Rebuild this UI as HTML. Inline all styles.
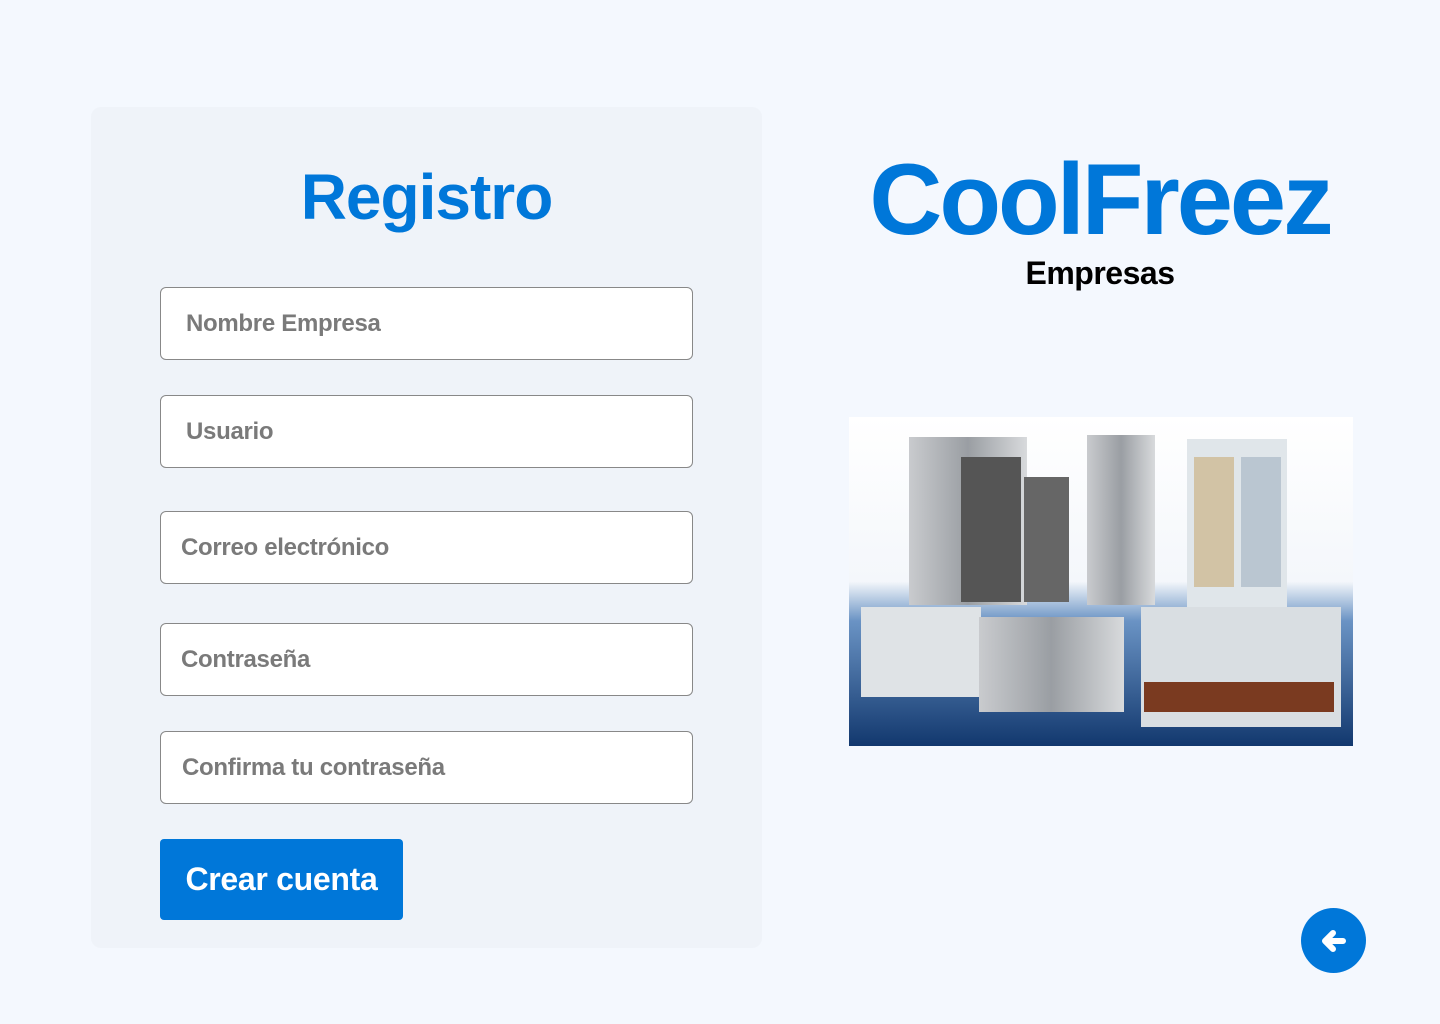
<!DOCTYPE html>
<html><head><meta charset="utf-8"><style>
*{box-sizing:border-box;margin:0;padding:0}
body{width:1440px;height:1024px;background:#f4f8fe;font-family:"Liberation Sans",Arial,sans-serif;position:relative;overflow:hidden}
.card{position:absolute;left:91px;top:107px;width:671px;height:841px;background:#eff3f9;border-radius:10px}
h1{position:absolute;left:91px;width:671px;top:160px;text-align:center;color:#0077d9;font-size:64px;font-weight:bold;letter-spacing:-1px}
.in{position:absolute;left:160px;width:533px;height:73px;background:#fff;border:1px solid #888;border-radius:6px;font-size:24px;font-weight:bold;color:#7a7a7a;line-height:72px;padding-left:25px;letter-spacing:-0.3px}
.btn{position:absolute;left:160px;top:839px;width:243px;height:81px;background:#0077d9;border-radius:4px;color:#fff;font-size:32px;font-weight:bold;line-height:81px;text-align:center;letter-spacing:-0.3px}
.logo{position:absolute;left:820px;width:560px;top:143px;text-align:center;color:#0077d9;font-size:101px;font-weight:bold;letter-spacing:-3px}
.sub{position:absolute;left:820px;width:560px;top:255px;text-align:center;color:#000;font-size:32px;font-weight:bold;letter-spacing:-0.5px}
.img{position:absolute;left:849px;top:417px;width:504px;height:329px}
.back{position:absolute;left:1301px;top:908px;width:65px;height:65px;border-radius:50%;background:#0077d9}
</style></head><body>
<div class="card"></div>
<h1>Registro</h1>
<div class="in" style="top:287px">Nombre Empresa</div>
<div class="in" style="top:395px">Usuario</div>
<div class="in" style="top:511px;padding-left:20px">Correo electrónico</div>
<div class="in" style="top:623px;padding-left:20px">Contraseña</div>
<div class="in" style="top:731px;padding-left:21px">Confirma tu contraseña</div>
<div class="btn">Crear cuenta</div>
<div class="logo">CoolFreez</div>
<div class="sub">Empresas</div>
<svg class="img" viewBox="0 0 504 329">
<defs><linearGradient id="g" x1="0" y1="0" x2="0" y2="1"><stop offset="0" stop-color="#fff"/><stop offset="0.5" stop-color="#f4f7fb"/><stop offset="0.62" stop-color="#6a93c4"/><stop offset="1" stop-color="#12386e"/></linearGradient>
<linearGradient id="s" x1="0" x2="1"><stop offset="0" stop-color="#c9cbce"/><stop offset="0.5" stop-color="#9a9ea3"/><stop offset="1" stop-color="#d8dadc"/></linearGradient></defs>
<rect width="504" height="329" fill="url(#g)"/>
<rect x="60" y="20" width="118" height="168" fill="url(#s)"/>
<rect x="112" y="40" width="60" height="145" fill="#555"/>
<rect x="175" y="60" width="45" height="125" fill="#666"/>
<rect x="238" y="18" width="68" height="170" fill="url(#s)"/>
<rect x="338" y="22" width="100" height="170" fill="#e0e6ea"/>
<rect x="345" y="40" width="40" height="130" fill="#c4a060" opacity="0.5"/>
<rect x="392" y="40" width="40" height="130" fill="#a0b0c0" opacity="0.6"/>
<rect x="12" y="190" width="120" height="90" fill="#dfe3e6"/>
<rect x="130" y="200" width="145" height="95" fill="url(#s)"/>
<rect x="292" y="190" width="200" height="120" fill="#d9dee2"/>
<rect x="295" y="265" width="190" height="30" fill="#7a3a20"/>
</svg>
<div class="back"><svg width="65" height="65" viewBox="0 0 65 65"><path d="M42 33H25M32 25l-8 8 8 8" stroke="#fff" stroke-width="6" fill="none" stroke-linecap="round" stroke-linejoin="round"/></svg></div>
</body></html>
